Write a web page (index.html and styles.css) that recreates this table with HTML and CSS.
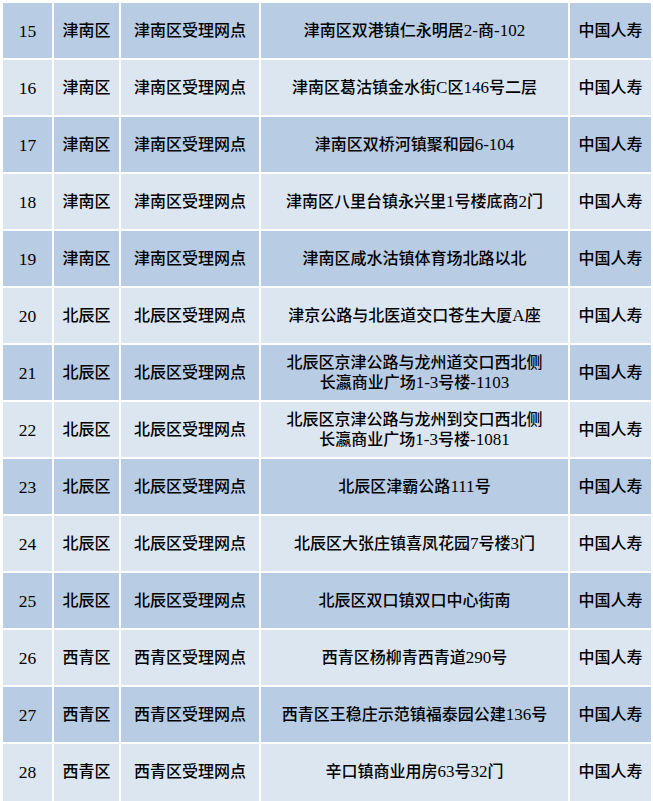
FILE: index.html
```html
<!DOCTYPE html>
<html lang="zh-CN">
<head>
<meta charset="utf-8">
<title>网点列表</title>
<link rel="stylesheet" href="styles.css">
</head>
<body>
<table class="sites">
  <colgroup>
    <col class="c-no"><col class="c-dist"><col class="c-name"><col class="c-addr"><col class="c-co">
  </colgroup>
  <tbody>
    <tr class="dark"><td class="no">15</td><td>津南区</td><td>津南区受理网点</td><td>津南区双港镇仁永明居<span class="n">2-</span>商<span class="n">-102</span></td><td>中国人寿</td></tr>
    <tr class="light"><td class="no">16</td><td>津南区</td><td>津南区受理网点</td><td>津南区葛沽镇金水街<span class="n">C</span>区<span class="n">146</span>号二层</td><td>中国人寿</td></tr>
    <tr class="dark"><td class="no">17</td><td>津南区</td><td>津南区受理网点</td><td>津南区双桥河镇聚和园<span class="n">6-104</span></td><td>中国人寿</td></tr>
    <tr class="light"><td class="no">18</td><td>津南区</td><td>津南区受理网点</td><td>津南区八里台镇永兴里<span class="n">1</span>号楼底商<span class="n">2</span>门</td><td>中国人寿</td></tr>
    <tr class="dark"><td class="no">19</td><td>津南区</td><td>津南区受理网点</td><td>津南区咸水沽镇体育场北路以北</td><td>中国人寿</td></tr>
    <tr class="light"><td class="no">20</td><td>北辰区</td><td>北辰区受理网点</td><td>津京公路与北医道交口苍生大厦<span class="n">A</span>座</td><td>中国人寿</td></tr>
    <tr class="dark"><td class="no">21</td><td>北辰区</td><td>北辰区受理网点</td><td>北辰区京津公路与龙州道交口西北侧<br>长瀛商业广场<span class="n">1-3</span>号楼<span class="n">-1103</span></td><td>中国人寿</td></tr>
    <tr class="light"><td class="no">22</td><td>北辰区</td><td>北辰区受理网点</td><td>北辰区京津公路与龙州到交口西北侧<br>长瀛商业广场<span class="n">1-3</span>号楼<span class="n">-1081</span></td><td>中国人寿</td></tr>
    <tr class="dark"><td class="no">23</td><td>北辰区</td><td>北辰区受理网点</td><td>北辰区津霸公路<span class="n">111</span>号</td><td>中国人寿</td></tr>
    <tr class="light"><td class="no">24</td><td>北辰区</td><td>北辰区受理网点</td><td>北辰区大张庄镇喜凤花园<span class="n">7</span>号楼<span class="n">3</span>门</td><td>中国人寿</td></tr>
    <tr class="dark"><td class="no">25</td><td>北辰区</td><td>北辰区受理网点</td><td>北辰区双口镇双口中心街南</td><td>中国人寿</td></tr>
    <tr class="light"><td class="no">26</td><td>西青区</td><td>西青区受理网点</td><td>西青区杨柳青西青道<span class="n">290</span>号</td><td>中国人寿</td></tr>
    <tr class="dark"><td class="no">27</td><td>西青区</td><td>西青区受理网点</td><td>西青区王稳庄示范镇福泰园公建<span class="n">136</span>号</td><td>中国人寿</td></tr>
    <tr class="light last"><td class="no">28</td><td>西青区</td><td>西青区受理网点</td><td>辛口镇商业用房<span class="n">63</span>号<span class="n">32</span>门</td><td>中国人寿</td></tr>
  </tbody>
</table>
</body>
</html>
```

FILE: styles.css
```css
html, body {
  margin: 0;
  padding: 0;
  background: #ffffff;
}

body {
  padding: 1px 0 0 1px;
  height: 801px;
  box-sizing: border-box;
  overflow: hidden;
}

.sites {
  border-collapse: separate;
  border-spacing: 2px;
  table-layout: fixed;
  width: 652px;
  font-family: "Liberation Serif", "Noto Sans CJK SC", serif;
  font-size: 16px;
  font-weight: 500;
  line-height: 20px;
  color: #000000;
}

.c-no { width: 49px; }
.c-dist { width: 65px; }
.c-name { width: 138px; }
.c-addr { width: 307px; }
.c-co { width: 81px; }

.sites td {
  height: 55px;
  padding: 0;
  text-align: center;
  vertical-align: middle;
  white-space: nowrap;
  overflow: hidden;
  box-sizing: border-box;
}

.sites td.no {
  font-size: 17.5px;
  padding-top: 1px;
}

.n {
  font-size: 17px;
  line-height: 1;
}

.sites .last td {
  height: 57px;
  padding-bottom: 2px;
}

.dark td { background: #b8cce4; }
.light td { background: #dce6f1; }
```
